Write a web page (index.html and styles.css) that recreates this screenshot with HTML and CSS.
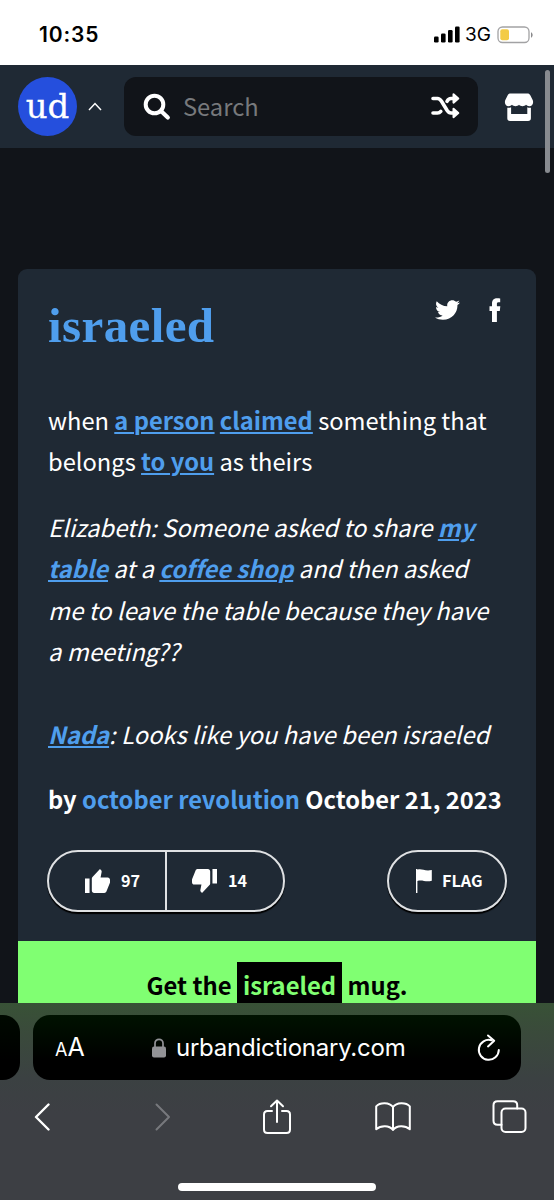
FILE: index.html
```html
<!DOCTYPE html>
<html lang="en">
<head>
<meta charset="utf-8">
<title>Urban Dictionary: israeled</title>
<link rel="stylesheet" href="styles.css">
</head>
<body>
<div class="phone">
  <div class="status">
    <span class="clock">10:35</span>
    <div class="indicators">
      <svg class="signal" width="26" height="17" viewBox="0 0 26 17"><rect x="0" y="10.500" width="4.600" height="6" rx="1.300"/><rect x="7" y="7.500" width="4.600" height="9" rx="1.300"/><rect x="14" y="4" width="4.600" height="12.500" rx="1.300"/><rect x="21" y="0.500" width="4.600" height="16" rx="1.300"/></svg>
      <span class="network">3G</span>
      <svg class="battery" width="37" height="18" viewBox="0 0 37 18"><rect x="1" y="1" width="31" height="15.500" rx="4.500" fill="#fff" stroke="#a2a2a4" stroke-width="1.300"/><rect x="3.300" y="3.300" width="8.700" height="10.900" rx="2" fill="#f3cb45"/><path d="M34 6.200c2.200 1 2.200 4.500 0 5.500z" fill="#8a8a8c"/></svg>
    </div>
  </div>

  <header class="topbar">
    <div class="logo"><span>ud</span></div>
    <svg class="caret" width="14" height="9" viewBox="0 0 14 9"><path d="M1 8l6-6.500L13 8"/></svg>
    <div class="search">
      <svg width="28" height="28" viewBox="0 0 28 28" fill="none" stroke="#fff" stroke-linecap="round"><circle cx="11.500" cy="11.500" r="8.800" stroke-width="4"/><path d="M18.500 18.500L24.800 24.500" stroke-width="4.200"/></svg>
      <span class="placeholder">Search</span>
      <svg class="shuffle" width="29" height="26" viewBox="0 0 29 26" fill="none" stroke="#fff" stroke-width="3.600" stroke-linecap="round" stroke-linejoin="round"><path d="M2 5.500h4.500c2 0 3 1.200 4 2.700l5.500 9.100c1 1.500 2 2.700 4 2.700h3M2 20h4.500c1.400 0 2.400-.6 3.300-1.700M16 8.300C17 6.500 18 5.500 20 5.500h3"/><path d="M22.500 1.300L27.300 5.500l-4.800 4.200zM22.500 15.800L27.300 20l-4.800 4.200z" fill="#fff" stroke-width="2"/></svg>
    </div>
    <svg class="store" width="30" height="29" viewBox="0 0 30 29" fill="#fff"><path d="M6.500.5h17c1.300 0 2.100.6 2.800 1.700l2.500 5.100c1 3-.5 5.700-3.300 5.900-1.500.1-2.600-.5-3.500-1.400-1 1-2.100 1.400-3.500 1.400S16 12.800 15 11.800c-1 1-2.100 1.400-3.500 1.400S9 12.800 8 11.800c-.9.900-2 1.500-3.500 1.400C1.700 13 .2 10.300 1.200 7.300l2.500-5.100C4.400 1.100 5.200.500 6.500.5z"/><path d="M3.300 14.700c1.400.3 2.500.2 3.800-.4V21h16.200v-6.700c1.300.6 2.200.7 3.600.4v10.600c0 1.700-1.100 2.700-2.800 2.700H6c-1.700 0-2.700-1-2.700-2.700z"/></svg>
  </header>

  <main class="page">
    <article class="card">
      <div class="card-body">
        <div class="card-head">
          <h1 class="word">israeled</h1>
          <div class="share">
            <svg width="25" height="24" viewBox="0 0 512 512" preserveAspectRatio="none" fill="#fff"><path d="M459.370 151.716c.325 4.548.325 9.097.325 13.645 0 138.720-105.583 298.558-298.558 298.558-59.452 0-114.680-17.219-161.137-47.106 8.447.974 16.568 1.299 25.340 1.299 49.055 0 94.213-16.568 130.274-44.832-46.132-.975-84.792-31.188-98.112-72.772 6.498.974 12.995 1.624 19.818 1.624 9.421 0 18.843-1.300 27.614-3.573-48.081-9.747-84.143-51.980-84.143-102.985v-1.299c13.969 7.797 30.214 12.670 47.431 13.319-28.264-18.843-46.781-51.005-46.781-87.391 0-19.492 5.197-37.360 14.294-52.954 51.655 63.675 129.300 105.258 216.365 109.807-1.624-7.797-2.599-15.918-2.599-24.040 0-57.828 46.782-104.934 104.934-104.934 30.213 0 57.502 12.670 76.670 33.137 23.715-4.548 46.456-13.320 66.599-25.340-7.798 24.366-24.366 44.833-46.132 57.827 21.117-2.273 41.584-8.122 60.426-16.243-14.292 20.791-32.161 39.308-52.628 54.253z"/></svg>
            <svg class="fb" width="12" height="24" viewBox="0 0 12 24" fill="#fff"><path d="M3 24V13H.5V8.300H3V5.500C3 1.800 5 .2 8.200.2c1.400 0 2.600.1 3 .2V4.300H9.300C8.100 4.300 7.900 5 7.900 6v2.300h3.400l-.5 4.700H7.900v11z"/></svg>
          </div>
        </div>

        <div class="meaning">
          <div>when <a>a person</a> <a>claimed</a> something that</div>
          <div>belongs <a>to you</a> as theirs</div>
        </div>

        <div class="example">
          <div>Elizabeth: Someone asked to share <a>my</a></div>
          <div><a>table</a> at a <a>coffee shop</a> and then asked</div>
          <div>me to leave the table because they have</div>
          <div>a meeting??</div>
          <div class="reply"><a>Nada</a>: Looks like you have been israeled</div>
        </div>

        <div class="byline">by <a>october revolution</a> October 21, 2023</div>

        <div class="actions">
          <div class="votes">
            <div class="vote up"><svg width="25" height="24" viewBox="1 1 22 20" preserveAspectRatio="none"><path d="M1 21h4V9H1v12zm22-11c0-1.100-.9-2-2-2h-6.310l.95-4.570.03-.32c0-.41-.17-.79-.44-1.060L14.170 1 7.590 7.590C7.220 7.950 7 8.450 7 9v10c0 1.100.9 2 2 2h9c.83 0 1.540-.5 1.840-1.220l3.020-7.050c.09-.23.14-.47.14-.73v-2z"/></svg><span>97</span></div>
            <div class="vote down"><svg width="25" height="24" viewBox="1 3 22 20" preserveAspectRatio="none"><path d="M15 3H6c-.83 0-1.540.5-1.840 1.220l-3.020 7.050c-.09.23-.14.47-.14.73v2c0 1.100.9 2 2 2h6.310l-.95 4.570-.03.32c0 .41.17.79.44 1.060L9.830 23l6.590-6.590c.36-.36.58-.86.58-1.410V5c0-1.100-.9-2-2-2zm4 0v12h4V3h-4z"/></svg><span>14</span></div>
          </div>
          <div class="flag"><svg width="16" height="24" viewBox="0 0 16 24"><path d="M0 0h1.400v24H0zM1.400.8c4-1.700 7 1.700 14.400.2v10.800c-6 1.700-9.400-1.200-14.400.2z"/></svg><span>FLAG</span></div>
        </div>
      </div>
      <div class="mug">Get the <mark>israeled</mark> mug.</div>
    </article>
    <div class="scroll-thumb"></div>
  </main>

  <footer class="safari">
    <div class="tabs">
      <div class="prev-tab"></div>
      <div class="address">
        <span class="aa"><small>A</small>A</span>
        <div class="site">
          <svg width="14" height="20" viewBox="0 0 14 20"><rect x="0" y="8.500" width="14" height="11" rx="2" fill="#929396"/><path d="M3 9V5.300a4 4 0 0 1 8 0V9" fill="none" stroke="#929396" stroke-width="1.700"/></svg>
          <span>urbandictionary.com</span>
        </div>
        <svg class="reload" width="24" height="28" viewBox="0 0 24 28"><path d="M14.500 6.200A10 10 0 1 0 21.800 16M11 1.500L17.200 6.700 11 12.400"/></svg>
      </div>
    </div>
    <nav class="tools">
      <svg class="back" width="16" height="28" viewBox="0 0 16 28"><path d="M14.500 1.500L2 14l12.500 12.500" stroke-width="2.400"/></svg>
      <svg class="dim" width="16" height="28" viewBox="0 0 16 28"><path d="M1.500 1.500L14 14 1.500 26.500"/></svg>
      <svg width="30" height="36" viewBox="0 0 30 36"><path d="M10 12H5.500C3 12 2 13 2 15.500v15C2 33 3 34 5.500 34h19c2.500 0 3.500-1 3.500-3.500v-15C28 13 27 12 24.500 12H20M15 23V1.500M9 7.200l6-5.700 6 5.700"/></svg>
      <svg class="book" width="36" height="30" viewBox="0 0 36 30"><path d="M18 5C14.500 0 5 0 1.200 4.300v23c4.800-4.100 13-4.100 16.800.7 3.800-4.800 12-4.800 16.800-.7v-23C31 0 21.500 0 18 5zM18 5v23"/></svg>
      <svg class="windows" width="35" height="33" viewBox="0 0 35 33"><rect x="9.500" y="8.500" width="24" height="23.500" rx="4"/><path d="M9.500 24.700H5.500c-2.700 0-4-1.300-4-4V5.200c0-2.700 1.300-4 4-4h15.700c2.700 0 4 1.300 4 4v3.300"/></svg>
    </nav>
    <div class="home"></div>
  </footer>
</div>
</body>
</html>
```
FILE: styles.css
```css
* { box-sizing: border-box; }
body { margin: 0; background: #111419; }
svg { display: block; flex: none; }
.phone {
  display: flex; flex-direction: column;
  width: 554px; height: 1200px; overflow: hidden;
  font-family: "Noto Sans CJK SC", "Noto Sans", sans-serif;
  color: #fff; background: #111419;
}

.status {
  display: flex; justify-content: space-between; flex: none;
  height: 65px; padding: 22px 20px 0 39px;
  background: #fff; color: #000;
  font-family: Inter, sans-serif;
}
.clock { font-size: 21px; line-height: 25px; font-weight: 600; letter-spacing: 0.85px; }
.indicators { display: flex; align-items: center; height: 25px; }
.network { font-size: 19px; line-height: 25px; margin: 0 6px 0 5px; }

.topbar {
  display: flex; align-items: center; flex: none;
  height: 83px; padding-left: 18px; background: #1f2934;
}
.logo {
  display: flex; justify-content: center; width: 59px; height: 59px;
  border-radius: 50%; background: #254fdd;
  font: 34px/58px "DejaVu Serif", serif;
  -webkit-text-stroke: 0.3px #fff;
}
.caret { margin: 0 22px 0 11px; fill: none; stroke: #fff; stroke-width: 1.5; }
.search {
  display: flex; align-items: center;
  width: 354px; height: 59px; padding: 0 18px 0 19px;
  border-radius: 12px; background: #111419;
}
.placeholder { flex: 1; padding-left: 12px; font-size: 23.7px; line-height: 35px; color: #77797c; }
.shuffle { margin-top: -2px; }
.store { margin: 1px 0 0 26px; }

.page { position: relative; flex: none; height: 855px; padding: 121px 18px 0; }
.card { height: 734px; border-radius: 9px 9px 0 0; background: #1f2934; overflow: hidden; }
.card-body { height: 672px; padding: 27px 29px 0 30px; }
.card-head { display: flex; justify-content: space-between; height: 104px; }
.word {
  margin: 0; font: bold 49px/60px "Liberation Serif", serif;
  color: #4f9eed; letter-spacing: 0.4px;
}
.share { display: flex; gap: 29px; padding: 2px 6px 0 0; }
.meaning, .example { font-size: 23.7px; line-height: 41.4px; white-space: nowrap; }
.card a { color: #4f9eed; font-weight: 700; }
.meaning a, .example a { text-decoration: underline; text-decoration-thickness: 2px; text-underline-offset: 2px; }
.example { margin-top: 24px; font-style: italic; letter-spacing: 0.02px; }
.reply { padding-top: 41.4px; }
.byline { margin-top: 24px; font-size: 23.7px; line-height: 41px; font-weight: 700; white-space: nowrap; }

.actions { display: flex; justify-content: space-between; margin: 30px 0 0 -1px; font-size: 16.2px; line-height: 24px; font-weight: 700; }
.actions svg { fill: #fff; }
.actions span { padding-bottom: 2px; }
.votes, .flag { display: flex; height: 62px; border: 2px solid #dfe1e3; border-radius: 31px; box-shadow: 0 2px 1px #000; }
.votes { width: 238px; }
.vote { display: flex; align-items: center; gap: 11px; }
.up { width: 118px; padding-left: 36px; border-right: 2px solid #dfe1e3; }
.down { padding-left: 25px; }
.flag { width: 120px; align-items: center; padding-left: 27px; gap: 10px; }

.mug { height: 100px; padding-top: 21px; background: #80ff72; color: #000; text-align: center; font-size: 23.8px; line-height: 46px; font-weight: 700; white-space: nowrap; }
.mug mark { display: inline-block; padding: 0 6px 2px; background: #000; color: #80ff72; }
.scroll-thumb { position: absolute; top: -78px; right: 4px; width: 5px; height: 103px; border-radius: 3px; background: #888b90; }

.safari {
  flex: none; height: 197px; padding-top: 12px;
  background: linear-gradient(#385236 0, #3a4a3b 30px, #3b4142 75px, #3d3f44 110px);
}
.tabs { display: flex; gap: 13px; height: 65px; }
.prev-tab { width: 20px; border-radius: 0 17px 17px 0; background: linear-gradient(#000900, #000 70%); }
.address {
  display: flex; align-items: center; width: 488px; padding: 0 20px 0 22px;
  border-radius: 17px; background: linear-gradient(#001200, #000 70%);
  font: 24px/32px Inter, sans-serif;
}
.aa { width: 97px; padding-top: 1px; font-size: 25px; }
.aa small { font-size: 18px; }
.site { display: flex; align-items: center; flex: 1; gap: 10px; letter-spacing: -0.24px; }
.reload, .tools svg { fill: none; stroke: #fff; stroke-width: 2; stroke-linecap: round; stroke-linejoin: round; }
.tools { display: grid; grid-template-columns: repeat(5, 1fr); align-items: center; justify-items: center; height: 73px; margin: 0 -16px; }
.tools .back, .tools .book { margin-right: 2px; }
.tools .windows { margin-right: 4px; }
.tools .dim { margin-left: 7px; stroke: #77797d; }
.home { width: 198px; height: 8px; margin: 30px auto 0; border-radius: 4px; background: #fff; }
```
